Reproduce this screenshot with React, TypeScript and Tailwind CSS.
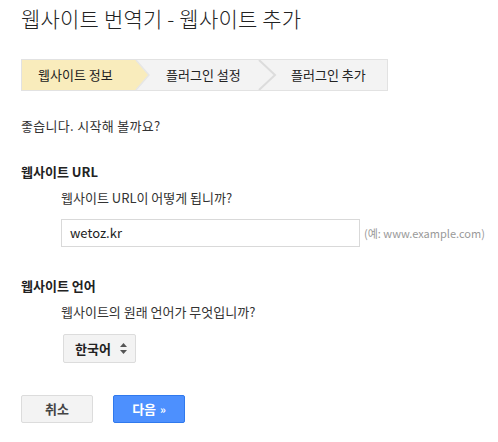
import React from "react";

const ko = { fontFamily: '"Noto Sans CJK KR", "Noto Sans", Arial, sans-serif' };

function Steps() {
  return (
    <div className="relative flex h-[32px] w-[367px] border border-[#e2e2e2] bg-[#f3f3f3] text-[13px] text-[#222]">
      <div className="flex w-[114px] items-center bg-[#f9ecbc] pl-4">웹사이트 정보</div>
      <div className="flex w-[140px] items-center pl-[30px]">플러그인 설정</div>
      <div className="flex flex-1 items-center pl-[15px]">플러그인 추가</div>
      {/* chevrons */}
      <svg className="absolute left-0 top-0" width="367" height="30" viewBox="0 0 367 30">
        <polygon points="114,0 127,15 114,30" fill="#f9ecbc" />
        <polyline points="114,0 127,15 114,30" fill="none" stroke="#e6e6e6" strokeWidth="1.5" />
        <polyline points="237,0 253,15 237,30" fill="none" stroke="#dcdcdc" strokeWidth="2" />
      </svg>
    </div>
  );
}

export default function App() {
  return (
    <div className="min-h-[442px] w-[498px] bg-white pl-[21px] text-[#333]" style={ko}>
      <h1 className="pt-[4px] text-[21px] leading-[28px] font-light tracking-[0.2px] text-[#222]">
        웹사이트 번역기 - 웹사이트 추가
      </h1>

      <div className="mt-[27px]">
        <Steps />
      </div>

      <p className="mt-[26px] text-[13px] leading-[18px] tracking-[0.3px]">좋습니다. 시작해 볼까요?</p>

      <h2 className="mt-[28px] text-[13px] leading-[18px] font-bold text-[#222]">웹사이트 URL</h2>
      <div className="pl-[40px]">
        <p className="mt-[8px] text-[13px] leading-[18px]">웹사이트 URL이 어떻게 됩니까?</p>
        <div className="mt-[12px] flex items-center gap-[4px]">
          <div className="flex h-[28px] w-[299px] items-center border border-[#d9d9d9] px-[8px] text-[13px] text-[#222]">
            wetoz.kr
          </div>
          <span className="text-[11px] text-[#999]">(예: www.example.com)</span>
        </div>
      </div>

      <h2 className="mt-[30px] text-[13px] leading-[18px] font-bold text-[#222]">웹사이트 언어</h2>
      <div className="pl-[40px]">
        <p className="mt-[8px] text-[13px] leading-[18px]">웹사이트의 원래 언어가 무엇입니까?</p>
        <div className="mt-[13px] ml-[2px] flex h-[29px] w-[73px] items-center justify-between rounded-[2px] border border-[#dcdcdc] bg-[#f3f3f3] pl-[11px] pr-[8px] text-[13px] font-bold text-[#222]">
          <span>한국어</span>
          <svg width="7" height="11" viewBox="0 0 7 11">
            <polygon points="3.5,0 7,4 0,4" fill="#555" />
            <polygon points="0,7 7,7 3.5,11" fill="#555" />
          </svg>
        </div>
      </div>

      <div className="mt-[32px] flex gap-[20px]">
        <button className="flex h-[28px] w-[72px] items-center justify-center rounded-[2px] border border-[#dcdcdc] bg-[#f3f3f3] text-[13px] font-bold text-[#444]">
          취소
        </button>
        <button className="flex h-[28px] w-[72px] items-center justify-center gap-1 rounded-[2px] border border-[#3079ed] bg-[#4d90fe] text-[13px] font-bold text-white">
          다음 <span className="text-[11px]">»</span>
        </button>
      </div>
    </div>
  );
}
